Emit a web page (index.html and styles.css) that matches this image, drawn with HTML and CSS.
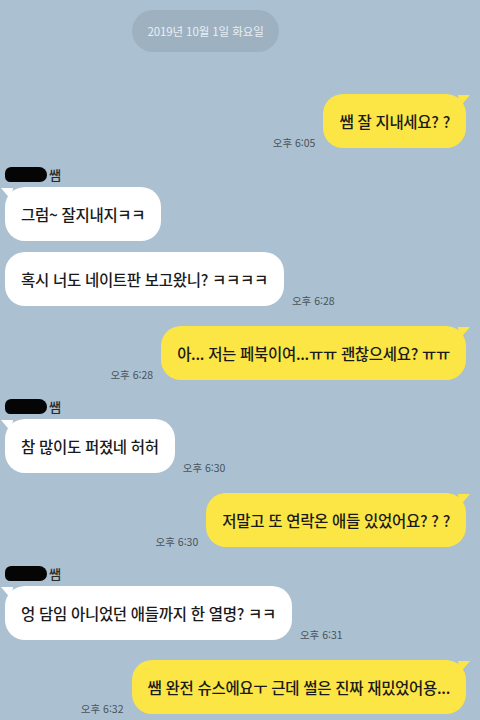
FILE: index.html
```html
<!DOCTYPE html>
<html lang="ko">
<head>
<meta charset="utf-8">
<link rel="stylesheet" href="styles.css">
</head>
<body>
<div class="chat">
  <div class="date"><span class="date-pill">2019년 10월 1일 화요일</span></div>

  <div class="row me after-date"><span class="time">오후 6:05</span><div class="bubble yellow tail">쌤 잘 지내세요? ?</div></div>

  <div class="sender"><span class="redact"></span><span class="name">쌤</span></div>
  <div class="row you"><div class="bubble white tail">그럼~ 잘지내지ㅋㅋ</div></div>
  <div class="row you same"><div class="bubble white">혹시 너도 네이트판 보고왔니? ㅋㅋㅋㅋ</div><span class="time">오후 6:28</span></div>

  <div class="row me group"><span class="time">오후 6:28</span><div class="bubble yellow tail">아... 저는 페북이여...ㅠㅠ 괜찮으세요? ㅠㅠ</div></div>

  <div class="sender"><span class="redact"></span><span class="name">쌤</span></div>
  <div class="row you"><div class="bubble white tail">참 많이도 퍼졌네 허허</div><span class="time">오후 6:30</span></div>

  <div class="row me group"><span class="time">오후 6:30</span><div class="bubble yellow tail">저말고 또 연락온 애들 있었어요? ? ?</div></div>

  <div class="sender"><span class="redact"></span><span class="name">쌤</span></div>
  <div class="row you"><div class="bubble white tail">엉 담임 아니었던 애들까지 한 열명? ㅋㅋ</div><span class="time">오후 6:31</span></div>

  <div class="row me group"><span class="time">오후 6:32</span><div class="bubble yellow tail">쌤 완전 슈스에요ㅜ 근데 썰은 진짜 재밌었어용...</div></div>
</div>
</body>
</html>
```

FILE: styles.css
```css
* { box-sizing: border-box; }

html, body {
  margin: 0;
  padding: 0;
  background: #abc1d1;
  height: 720px;
  overflow: hidden;
}

body {
  font-family: "Noto Sans CJK KR", "Noto Sans", sans-serif;
  color: #1a1a1a;
}

.chat {
  display: flex;
  flex-direction: column;
  padding: 10px 14px 0 5px;
}

.date {
  display: flex;
  justify-content: flex-start;
  padding-left: 127px;
}

.date-pill {
  display: inline-flex;
  align-items: center;
  justify-content: center;
  height: 42px;
  width: 147px;
  border-radius: 21px;
  background: #9db1c1;
  color: #e9eff4;
  font-size: 11.5px;
  letter-spacing: -0.1px;
}

.row {
  display: flex;
  align-items: flex-end;
  gap: 8px;
}

.row.me { justify-content: flex-end; }
.row.you { justify-content: flex-start; }

.row.after-date { margin-top: 42px; }
.row.same { margin-top: 11px; }
.row.group { margin-top: 20px; }

.bubble {
  position: relative;
  height: 54px;
  padding: 0 16px;
  display: flex;
  align-items: center;
  border-radius: 20px;
  font-size: 15.5px;
  font-weight: 500;
  letter-spacing: -0.3px;
  white-space: nowrap;
}

.bubble.yellow { background: #fbe645; }
.bubble.white { background: #ffffff; }

.bubble.tail::after {
  content: "";
  position: absolute;
  top: 1px;
  width: 12px;
  height: 12px;
}

.bubble.yellow.tail::after {
  right: -4px;
  background: #fbe645;
  clip-path: polygon(0 0, 100% 0, 15% 100%);
}

.bubble.white.tail::after {
  left: -4px;
  background: #ffffff;
  clip-path: polygon(0 0, 100% 0, 85% 100%);
}

.time {
  font-size: 10.5px;
  color: #48525b;
  line-height: 12px;
  margin-bottom: -1px;
  white-space: nowrap;
}

.sender {
  display: flex;
  align-items: center;
  gap: 2px;
  height: 15px;
  margin-top: 19px;
  margin-bottom: 5px;
}

.redact {
  display: block;
  width: 42px;
  height: 15px;
  background: #050505;
  border-radius: 7px 9px 8px 6px;
}

.name {
  font-size: 13px;
  font-weight: 500;
  color: #2a2a2a;
  line-height: 15px;
}
```
